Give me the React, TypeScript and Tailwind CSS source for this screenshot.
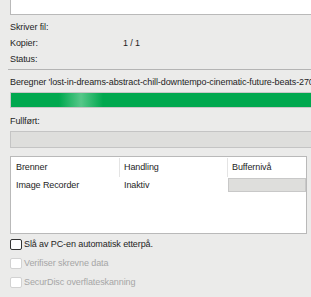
import React from 'react'

const font = { fontFamily: '"Liberation Sans", Arial, sans-serif' }

function Check({ label, disabled }: { label: string; disabled?: boolean }) {
  return (
    <div className={`flex items-center h-[19px] ${disabled ? 'text-[#a6a6a6]' : 'text-[#1e1e1e]'}`}>
      <span
        className={`w-[12px] h-[11px] rounded-[2px] border bg-white mr-[2px] ${
          disabled ? 'border-[#d2d2d2]' : 'border-[#333]'
        }`}
      />
      <span>{label}</span>
    </div>
  )
}

export default function App() {
  return (
    <div
      className="w-[311px] h-[297px] overflow-hidden bg-[#ebebea] text-[9px] tracking-[-0.1px] leading-none text-[#1e1e1e]"
      style={font}
    >
      <div className="pl-[10px] w-[330px]">
        {/* top box */}
        <div className="h-[15px] bg-white border border-t-0 border-[#b9b9b9]" />

        {/* info rows */}
        <div className="flex flex-col mt-[4px]">
          <div className="h-[16px] flex items-center">Skriver fil:</div>
          <div className="h-[16px] flex items-center">
            <span className="w-[113px]">Kopier:</span>
            <span>1 / 1</span>
          </div>
          <div className="h-[16px] flex items-center">Status:</div>
        </div>

        <div className="h-px bg-[#b4b4b4] mt-[2px] -ml-[2px]" />

        <div className="mt-[6px] h-[12px] flex items-center whitespace-nowrap">
          Beregner 'lost-in-dreams-abstract-chill-downtempo-cinematic-future-beats-270134.mp3'
        </div>

        <div className="relative mt-[4px] h-[16px] bg-[#00a84f] border border-[#c8c8c8] overflow-hidden">
          <div className="absolute top-0 bottom-0 left-[48px] w-[44px] bg-gradient-to-r from-transparent via-[#8fdcb0]/60 to-transparent" />
        </div>

        <div className="mt-[7px] h-[12px] flex items-center">Fullført:</div>

        <div className="mt-[4px] h-[17px] bg-[#dededc] border border-[#c4c4c4]" />

        {/* list */}
        <div className="mt-[8px] w-[297px] h-[78px] bg-white border border-[#b9b9b9] pt-[1px]">
          <div className="flex h-[19px] items-center">
            <div className="w-[109px] pl-[5px] h-full flex items-center border-r border-[#e4e4e4]">Brenner</div>
            <div className="w-[108px] pl-[4px] h-full flex items-center border-r border-[#e4e4e4]">Handling</div>
            <div className="pl-[4px] h-full flex items-center">Buffernivå</div>
          </div>
          <div className="flex h-[14px] items-center mt-[1px]">
            <div className="w-[109px] pl-[5px]">Image Recorder</div>
            <div className="w-[108px] pl-[4px]">Inaktiv</div>
            <div className="w-[78px] h-[14px] bg-[#dededc] border border-[#c8c8c8]" />
          </div>
        </div>

        <div className="mt-[1px] flex flex-col">
          <Check label="Slå av PC-en automatisk etterpå." />
          <Check label="Verifiser skrevne data" disabled />
          <Check label="SecurDisc overflateskanning" disabled />
        </div>
      </div>
    </div>
  )
}
